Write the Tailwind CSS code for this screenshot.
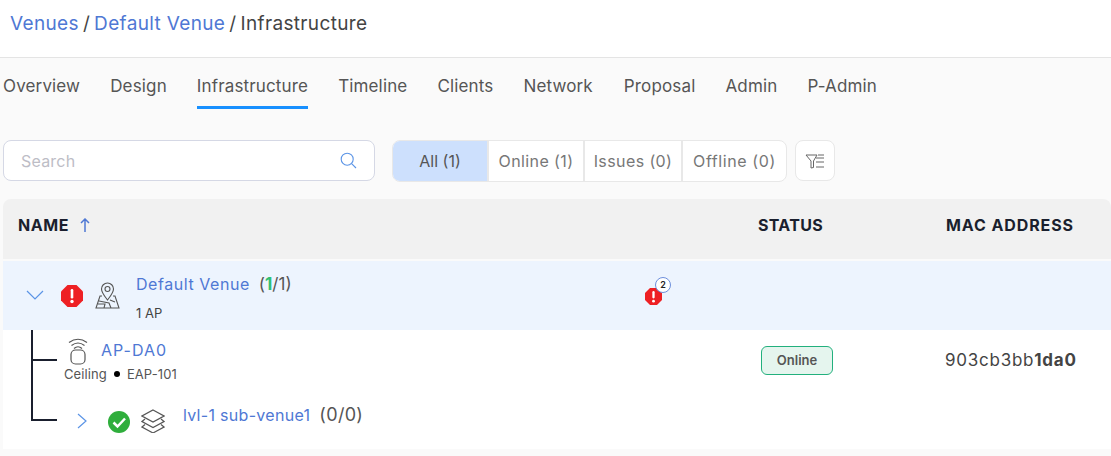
<!doctype html>
<html><head><meta charset="utf-8"><script src="https://cdn.jsdelivr.net/npm/@tailwindcss/browser@4"></script></head>
<body class="w-[1111px] h-[456px] overflow-hidden bg-[#fafafa] font-['Inter',sans-serif] text-[#444]">
<header class="h-[58px] bg-white border-b border-[#e4e4e4] pl-[10px] pt-[11px] text-[19px] leading-[26px] tracking-[0.35px] text-[#444] flex gap-[4px]">
  <span class="text-[#4f78d4]">Venues</span><span>/</span><span class="text-[#4f78d4]">Default Venue</span><span>/</span><span>Infrastructure</span>
</header>
<nav class="h-[52px] flex pl-[3px] gap-[30px] text-[17px] tracking-[0.15px] text-[#555] pt-[16px] leading-[24px]">
  <span>Overview</span><span>Design</span>
  <span class="relative">Infrastructure<span class="absolute left-0 right-0 top-[32px] h-[3px] bg-[#1890ff]"></span></span>
  <span>Timeline</span><span>Clients</span><span>Network</span><span class="ml-[1px]">Proposal</span><span>Admin</span><span>P-Admin</span>
</nav>
<section class="flex items-start pl-[3px] pt-[30px] h-[89px]">
  <div class="w-[372px] h-[41px] bg-white border border-[#d5d8e5] rounded-lg flex items-center justify-between pl-[17px] pr-[17px] text-[16px] tracking-[0.2px] text-[#bdbdc6]">
    <span>Search</span>
    <svg width="17" height="17" viewBox="0 0 17 17" fill="none" stroke="#5b94e6" stroke-width="1.1"><circle cx="7.2" cy="7.2" r="6"/><path d="M11.6 11.6 16 16"/></svg>
  </div>
  <div class="ml-[17px] w-[395px] h-[42px] bg-white border border-[#e8e8e8] rounded-lg flex overflow-hidden text-[16px] tracking-[0.4px] text-[#777]">
    <span class="w-[94px] bg-[#cde0fd] text-[#555] tracking-normal flex items-center justify-center">All (1)</span>
    <span class="w-[96px] border-l-2 border-[#e8e8e8] flex items-center justify-center">Online (1)</span>
    <span class="w-[98px] border-l-2 border-[#e8e8e8] flex items-center justify-center">Issues (0)</span>
    <span class="flex-1 border-l-2 border-[#e8e8e8] tracking-[0.6px] flex items-center justify-center">Offline (0)</span>
  </div>
  <div class="ml-[8px] w-[40px] h-[41px] bg-white border border-[#e8e8e8] rounded-lg flex items-center justify-center">
    <svg width="20" height="16" viewBox="0 0 20 16" fill="none" stroke="#666" stroke-width="1"><path d="M1 2h11L8.500 8v6.500L6 15V8z"/><path d="M11 5h8M11 9h8M11 14h8M13 2h6"/></svg>
  </div>
</section>
<section class="ml-[3px]">
  <div class="h-[60px] bg-[#f1f1f1] rounded-t-lg flex items-start pt-[14px] text-[16px] leading-[24px] font-bold text-[#1a1f2e] tracking-[0.6px]">
    <div class="w-[755px] pl-[15px] flex items-center gap-[11px]">NAME
      <svg width="10" height="14" viewBox="0 0 10 14" fill="none" stroke="#4f78d4" stroke-width="1.500"><path d="M5 14V1M1 5l4-4 4 4"/></svg>
    </div>
    <div class="w-[188px] tracking-[0.3px]">STATUS</div>
    <div class="tracking-[0.9px]">MAC ADDRESS</div>
  </div>
  <div class="mt-[2px] h-[69px] bg-[#edf4fe] flex relative">
    <div class="flex items-center pl-[23px] gap-[15px]">
      <svg width="18" height="11" viewBox="0 0 18 11" fill="none" stroke="#5b94e6" stroke-width="1.200"><path d="M1 1l8 8 8-8"/></svg>
      <svg width="22" height="22" viewBox="0 0 22 22" class="ml-[2px]"><path d="M6.500 0h9L22 6.500v9L15.500 22h-9L0 15.500v-9z" fill="#ee2024"/><rect x="9.700" y="4" width="2.600" height="9.500" rx="1.300" fill="#fff"/><circle cx="11" cy="16.500" r="1.700" fill="#fff"/></svg>
      <svg width="25" height="27" viewBox="0 0 25 27" fill="none" stroke="#555" stroke-width="1.100" class="ml-[-3px]"><path d="M12.500 18C9 13.500 6.500 10.500 6.500 7a6 6 0 0 1 12 0c0 3.500-2.500 6.500-6 11z"/><circle cx="12.500" cy="7" r="2.500"/><path d="M7 14H5L1 26h23l-4-12h-2M4 19l10 2 2 5M3 22h7l-1 4M15 18l5 2"/></svg>
    </div>
    <div class="absolute left-[133px] top-[11px] flex items-baseline text-[16px] tracking-[0.55px] leading-[24px] text-[#4f78d4]">Default Venue<span class="ml-[9px] text-[17px] tracking-normal text-[#555]">(<b class="text-[#2fbf71]">1</b>/1)</span></div>
    <div class="absolute left-[133px] top-[42px] text-[13px] leading-[20px] text-[#444]">1 AP</div>
    <div class="absolute left-[642px] top-[16px] w-[26px] h-[28px]">
      <svg width="17" height="17" viewBox="0 0 22 22" class="absolute left-0 bottom-0"><path d="M6.500 0h9L22 6.500v9L15.500 22h-9L0 15.500v-9z" fill="#ee2024"/><rect x="9.500" y="4" width="3" height="9.500" rx="1.500" fill="#fff"/><circle cx="11" cy="17" r="1.800" fill="#fff"/></svg>
      <span class="absolute right-0 top-0 w-[16px] h-[16px] rounded-full bg-white border border-[#6d8fdc] text-[9px] font-semibold leading-[14px] text-center text-[#222]">2</span>
    </div>
  </div>
  <div class="h-[119px] bg-white relative">
    <div class="absolute left-[28px] top-0 w-[2px] h-[91px] bg-[#1a1f2e]"></div>
    <div class="absolute left-[28px] top-[29px] w-[26px] h-[2px] bg-[#1a1f2e]"></div>
    <div class="absolute left-[28px] top-[89px] w-[26px] h-[2px] bg-[#1a1f2e]"></div>
    <svg width="20" height="28" viewBox="0 0 20 28" fill="none" stroke="#555" stroke-width="1.200" class="absolute left-[65px] top-[7px]"><rect x="3" y="13" width="14" height="14" rx="4.500"/><path d="M1 5.500Q10-1 19 5.500M3.500 8.500Q10 3.500 16.500 8.500M6 11.500Q10 8 14 11.500"/></svg>
    <div class="absolute left-[98px] top-[8px] text-[16px] tracking-[1px] leading-[24px] text-[#4f78d4]">AP-DA0</div>
    <div class="absolute left-[61px] top-[35px] flex items-center text-[13px] tracking-[0.1px] leading-[18px] text-[#555]">Ceiling<span class="w-[6px] h-[6px] rounded-full bg-black mx-[7px]"></span>EAP-101</div>
    <div class="absolute left-[758px] top-[16px] w-[72px] h-[29px] bg-[#e5f5ee] border border-[#22b07d] rounded-md flex items-center justify-center text-[13px] font-semibold text-[#555]">Online</div>
    <div class="absolute left-[942px] top-[18px] text-[17px] tracking-[0.75px] leading-[24px] text-[#444]">903cb3bb<b>1da0</b></div>
    <svg width="12" height="16" viewBox="0 0 12 16" fill="none" stroke="#5b94e6" stroke-width="1.200" class="absolute left-[73px] top-[83px]"><path d="M2 1l8 7-8 7"/></svg>
    <svg width="22" height="22" viewBox="0 0 22 22" class="absolute left-[105px] top-[81px]"><circle cx="11" cy="11" r="11" fill="#2fae3c"/><path d="M5.500 11.500l4 4 7.500-8" fill="none" stroke="#fff" stroke-width="2.500"/></svg>
    <svg width="24" height="24" viewBox="0 0 24 24" fill="none" stroke="#555" stroke-width="1.200" class="absolute left-[138px] top-[79px]"><path d="M12 1l11 6-11 6L1 7zM4 10l-3 2.500 11 6 11-6-3-2.500M4 15.500l-3 2.500 11 6 11-6-3-2.500"/></svg>
    <div class="absolute left-[180px] top-[73px] flex items-baseline text-[16px] tracking-[0.3px] leading-[24px] text-[#4f78d4]">lvl-1 sub-venue1<span class="ml-[9px] text-[18px] text-[#555]">(0/0)</span></div>
  </div>
</section>
</body></html>
